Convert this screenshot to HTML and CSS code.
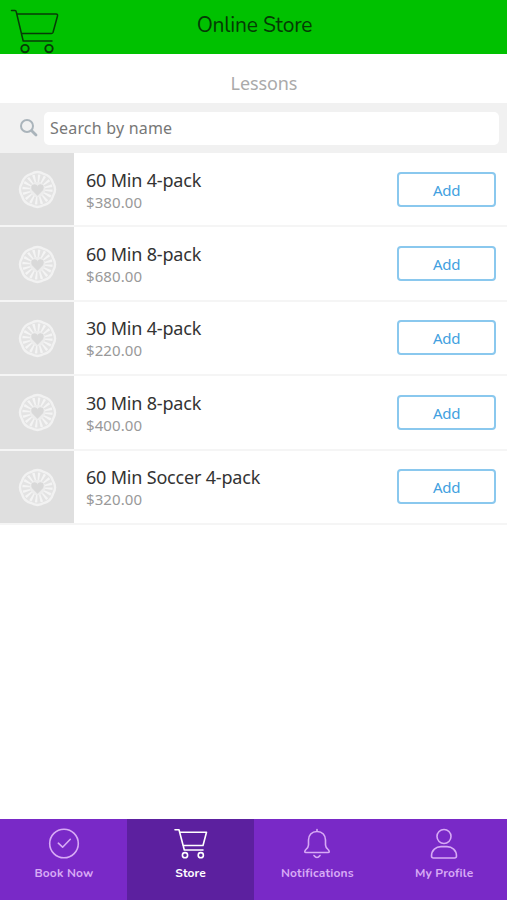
FILE: index.html
```html
<!DOCTYPE html>
<html lang="en">
<head>
<meta charset="utf-8">
<title>Online Store</title>
<link rel="stylesheet" href="styles.css">
</head>
<body>
<svg class="defs" width="0" height="0" aria-hidden="true">
  <symbol id="gem" viewBox="-20 -20 40 40">
    <path d="M-6.500 -16Q0 -20 6.500 -16Q14 -14 16 -6.500Q20 0 16 6.500Q14 14 6.500 16Q0 20 -6.500 16Q-14 14 -16 6.500Q-20 0 -16 -6.500Q-14 -14 -6.500 -16Z" fill="#e3e3e3" stroke="#f2f2f2" stroke-width="2.400"/>
    <circle r="11.500" fill="none" stroke="#f4f4f4" stroke-width="8" stroke-dasharray="2 2.516"/>
    <circle r="8" fill="#ededed"/>
    <path d="M0 7L-5.800 1C-9 -4.500 -3 -8 0 -4C3 -8 9 -4.500 5.800 1Z" fill="#d9d9d9" stroke="#ededed" stroke-width=".7"/>
  </symbol>
</svg>
<header class="topbar">
  <svg class="topbar-cart" viewBox="0 0 52 46" fill="none" stroke="#073b07" stroke-width="1.5" stroke-linecap="round" stroke-linejoin="round">
    <path d="M1.5 2.5H5Q6 2.5 6.3 4L13.2 33H42M7 6H46Q48 6 47.5 8L43 24.5Q42.5 25.5 41.5 25.5H11.5"/>
    <circle cx="15" cy="40.6" r="3.7" stroke-width="1.9"/><circle cx="39" cy="40.6" r="3.7" stroke-width="1.9"/>
  </svg>
  <h1 class="topbar-title">Online Store</h1>
</header>
<main class="store">
  <h2 class="section">Lessons</h2>
  <div class="search">
    <svg class="search-icon" viewBox="0 0 20 20" fill="none" stroke="#aab4bb" stroke-linecap="round"><circle cx="8" cy="8" r="6" stroke-width="2"/><path d="M12.7 12.7L17 17" stroke-width="2.800"/></svg>
    <div class="search-field">Search by name</div>
  </div>
  <ul class="items">
    <li class="item"><div class="thumb"><svg><use href="#gem"/></svg></div><div class="info"><div class="name">60 Min 4-pack</div><div class="price">$380.00</div></div><button class="add">Add</button></li>
    <li class="item"><div class="thumb"><svg><use href="#gem"/></svg></div><div class="info"><div class="name">60 Min 8-pack</div><div class="price">$680.00</div></div><button class="add">Add</button></li>
    <li class="item"><div class="thumb"><svg><use href="#gem"/></svg></div><div class="info"><div class="name">30 Min 4-pack</div><div class="price">$220.00</div></div><button class="add">Add</button></li>
    <li class="item"><div class="thumb"><svg><use href="#gem"/></svg></div><div class="info"><div class="name">30 Min 8-pack</div><div class="price">$400.00</div></div><button class="add">Add</button></li>
    <li class="item"><div class="thumb"><svg><use href="#gem"/></svg></div><div class="info"><div class="name">60 Min Soccer 4-pack</div><div class="price">$320.00</div></div><button class="add">Add</button></li>
  </ul>
</main>
<nav class="tabs">
  <a class="tab"><svg viewBox="0 0 36 32"><circle cx="18" cy="15.500" r="14.300"/><path d="M12.300 15.200L16.600 19.200L24.300 11.300"/></svg><span class="label">Book Now</span></a>
  <a class="tab active"><svg viewBox="0 0 36 32"><path d="M2 1.800H6L11.300 22H30M7 4.300H33.500L30 17.500H10"/><circle cx="12" cy="27.200" r="2.600"/><circle cx="27.800" cy="27.200" r="2.600"/></svg><span class="label">Store</span></a>
  <a class="tab"><svg viewBox="0 0 36 32"><path d="M18 1.500V3.500M18 3.500C12.500 3.500 9.500 7.500 9.500 12V17Q9.500 19.500 6.500 22Q4.800 24.500 7 24.500H29Q31.200 24.500 29.500 22Q26.500 19.500 26.500 17V12C26.500 7.500 23.500 3.500 18 3.500M15 27.500Q18 31.500 21 27.500"/></svg><span class="label">Notifications</span></a>
  <a class="tab"><svg viewBox="0 0 36 32"><circle cx="18" cy="8.500" r="7"/><path d="M7.500 30H28.500Q30.500 30 30.500 28C30.500 22 26 18.600 21 18.600H15C10 18.600 5.500 22 5.500 28Q5.500 30 7.500 30Z"/></svg><span class="label">My Profile</span></a>
</nav>
</body>
</html>
```
FILE: styles.css
```css
* { box-sizing: border-box; }
body { margin: 0; height: 900px; display: flex; flex-direction: column; background: #fff; font-family: "Noto Sans", "Open Sans", sans-serif; overflow: hidden; }
.defs { display: none; }
h1, h2, ul { margin: 0; padding: 0; font-weight: 400; }
.topbar { height: 53.5px; flex: none; background: #00c100; display: grid; grid-template-columns: 1fr auto 1fr; }
.topbar-cart { width: 52px; height: 46px; margin: 8px 0 0 10px; }
.topbar-title { grid-column: 2; font: 21px/51px Nunito, Lato, sans-serif; color: #053a05; letter-spacing: -.2px; margin-left: 2px; }
.store { flex: 1; }
.section { height: 49.5px; padding: 15px 0 0 21px; text-align: center; font-size: 18px; line-height: 28px; color: #aaa; letter-spacing: -.1px; }
.search { height: 50px; background: #f1f1f1; display: flex; align-items: center; padding: 0 8px 0 19px; }
.search-icon { width: 20px; height: 20px; margin-right: 5px; }
.search-field { flex: 1; height: 33px; border-radius: 5px; background: #fff; padding-left: 6px; font-size: 16px; line-height: 33px; color: #777; letter-spacing: .2px; }
.items { list-style: none; }
.item { height: 74.4px; display: flex; align-items: center; border-bottom: 2px solid #f5f5f5; padding-right: 11px; }
.thumb { width: 74px; height: 100%; background: #dfdfdf; display: flex; align-items: center; justify-content: center; padding: 1px 0 0 1px; }
.thumb svg { width: 39px; height: 39px; }
.info { flex: 1; padding: 2px 0 0 12px; }
.name { font-size: 18px; line-height: 23px; color: #333; letter-spacing: -.19px; }
.price { font-size: 15px; line-height: 20px; color: #999; letter-spacing: .1px; }
.add { width: 99px; height: 35px; border: 2px solid #8ac8ee; border-radius: 4px; background: #fff; color: #429fe0; font: 15px "Noto Sans", sans-serif; padding: 1px 0 0; letter-spacing: -.3px; }
.tabs { height: 81.5px; flex: none; display: grid; grid-template-columns: repeat(4, 1fr); background: #7929c7; }
.tab { display: flex; flex-direction: column; align-items: center; padding: 9px 0 0 1px; color: #d7aaf5; }
.tab svg { width: 36px; height: 32px; fill: none; stroke: currentColor; stroke-width: 1.6; stroke-linecap: round; stroke-linejoin: round; }
.active { background: #5c209f; color: #fff; }
.label { font: 700 12px/16px Nunito, Lato, sans-serif; margin-top: 5px; letter-spacing: .15px; }
.active .label { letter-spacing: .1px; }
```
